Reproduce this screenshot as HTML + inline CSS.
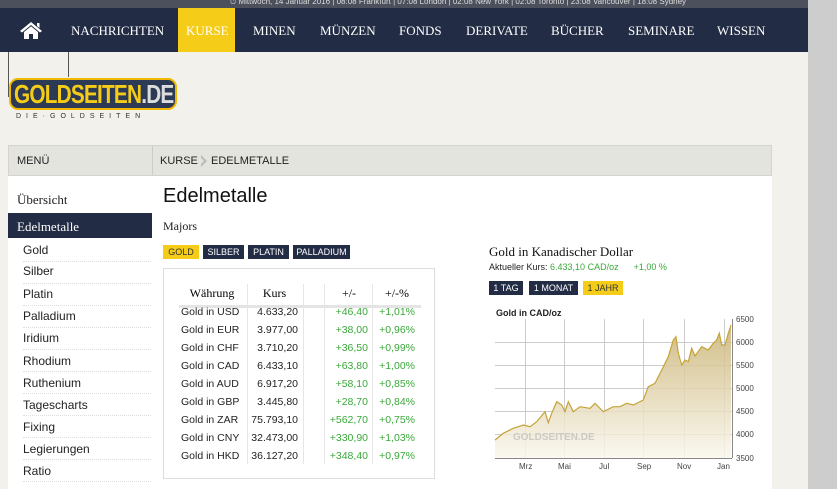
<!DOCTYPE html>
<html><head><meta charset="utf-8"><style>
*{margin:0;padding:0;box-sizing:border-box}
html,body{width:837px;height:489px;overflow:hidden}
body{background:#f2f1ec;font-family:"Liberation Sans",sans-serif;position:relative}
.abs{position:absolute}
#top{left:0;top:0;width:808px;height:8px;background:#4b505c;color:#ddd;font-size:8px;line-height:3px;overflow:hidden}
#nav{left:0;top:8px;width:808px;height:44px;background:#222c45}
#nav span{position:absolute;top:15px;color:#fff;font:13px "Liberation Serif",serif;white-space:nowrap}
#kurse{left:178px;top:8px;width:57px;height:44px;background:#f5cc17}
#sb{left:808px;top:0;width:29px;height:489px;background:#cdcdcd}
#hdr{left:8px;top:145px;width:764px;height:31px;background:#e4e4df;border:1px solid #d4d4ce}
#hdr span{position:absolute;top:9px;font-size:11px;color:#222;white-space:nowrap}
#white{left:8px;top:176px;width:764px;height:313px;background:#fff}
.mi{position:absolute;left:23px;font-size:12px;color:#222}
.ml{position:absolute;left:23px;width:128px;border-bottom:1px dotted #ddd}
.btn{position:absolute;height:14px;font-size:9px;line-height:14px;text-align:center;color:#fff;background:#222c45}
.y{background:#f5cc17;color:#333}
#tb{left:163px;top:268px;width:272px;height:211px;border:1px solid #ddd;background:#fff}
.r{position:absolute;font-size:10.5px;color:#222;white-space:nowrap;line-height:18px}
.g{color:#3aa83a}
</style></head><body>
<div id="top" class="abs"><span style="position:absolute;left:230px;top:0;white-space:nowrap">⏱ Mittwoch, 14 Januar 2016 | 08:08 Frankfurt | 07:08 London | 02:08 New York | 02:08 Toronto | 23:08 Vancouver | 18:08 Sydney</span></div>
<div id="nav" class="abs">
<svg style="position:absolute;left:19px;top:13px" width="24" height="18" viewBox="0 0 24 18"><path d="M12 1 L1 10 L3 11.5 L12 4 L21 11.5 L23 10 Z" fill="#fff"/><path d="M18 2h2.5v5L18 5z" fill="#fff"/><path d="M5 11 L12 5.3 L19 11 V18 H14 V13 H10 V18 H5 Z" fill="#fff"/></svg>
<span style="left:71px">NACHRICHTEN</span>
<span style="left:253px">MINEN</span>
<span style="left:320px">MÜNZEN</span>
<span style="left:399px">FONDS</span>
<span style="left:466px">DERIVATE</span>
<span style="left:551px">BÜCHER</span>
<span style="left:628px">SEMINARE</span>
<span style="left:717px">WISSEN</span>
</div>
<div id="kurse" class="abs"><span style="position:absolute;left:8px;top:15px;color:#fff;font:13px 'Liberation Serif',serif">KURSE</span></div>
<div class="abs" style="left:8px;top:52px;width:1px;height:45px;background:#555"></div>
<div class="abs" style="left:68px;top:52px;width:1px;height:25px;background:#555"></div>
<div class="abs" style="left:9px;top:78px;width:168px;height:32px;border-radius:9px;background:#2d3a55;border:2px solid #f0b800"></div>
<div class="abs" style="left:14px;top:79px;font:bold 26px 'Liberation Sans',sans-serif;color:#f5cc17;letter-spacing:-1px;transform:scaleX(.8);transform-origin:left;white-space:nowrap">GOLDSEITEN<span style="color:#ddd">.DE</span></div>
<div class="abs" style="left:16px;top:113px;font-size:7px;letter-spacing:5px;color:#333;white-space:nowrap">DIE·GOLDSEITEN</div>
<div id="sb" class="abs"></div>
<div id="hdr" class="abs"><span style="left:8px">MENÜ</span><div style="position:absolute;left:143px;top:0;width:1px;height:29px;background:#ccc"></div><span style="left:151px">KURSE</span><svg style="position:absolute;left:191px;top:9px" width="8" height="12"><path d="M1 0 L7 6 L1 12 L1 9 L4 6 L1 3Z" fill="#bbb"/></svg><span style="left:202px">EDELMETALLE</span></div>
<div id="white" class="abs"></div>
<div class="abs" style="left:17px;top:192px;font:13px 'Liberation Serif',serif;color:#222">Übersicht</div>
<div class="abs" style="left:8px;top:213px;width:144px;height:25px;background:#222c45"></div>
<div class="abs" style="left:17px;top:219px;font:13px 'Liberation Serif',serif;color:#fff">Edelmetalle</div>
<div class="mi" style="top:243px">Gold</div><div class="ml" style="top:261px"></div>
<div class="mi" style="top:264px">Silber</div><div class="ml" style="top:283px"></div>
<div class="mi" style="top:287px">Platin</div><div class="ml" style="top:305px"></div>
<div class="mi" style="top:309px">Palladium</div><div class="ml" style="top:327px"></div>
<div class="mi" style="top:331px">Iridium</div><div class="ml" style="top:349px"></div>
<div class="mi" style="top:354px">Rhodium</div><div class="ml" style="top:371px"></div>
<div class="mi" style="top:376px">Ruthenium</div><div class="ml" style="top:393px"></div>
<div class="mi" style="top:398px">Tagescharts</div><div class="ml" style="top:415px"></div>
<div class="mi" style="top:420px">Fixing</div><div class="ml" style="top:437px"></div>
<div class="mi" style="top:442px">Legierungen</div><div class="ml" style="top:459px"></div>
<div class="mi" style="top:464px">Ratio</div><div class="ml" style="top:481px"></div>
<div class="abs" style="left:163px;top:185px;font-size:20px;color:#111">Edelmetalle</div>
<div class="abs" style="left:163px;top:219px;font:12px 'Liberation Serif',serif;color:#222">Majors</div>
<div class="btn y" style="left:163px;top:245px;width:36px">GOLD</div>
<div class="btn" style="left:203px;top:245px;width:41px">SILBER</div>
<div class="btn" style="left:248px;top:245px;width:41px">PLATIN</div>
<div class="btn" style="left:293px;top:245px;width:57px">PALLADIUM</div>
<div id="tb" class="abs">
<div style="position:absolute;left:15px;top:36px;width:242px;height:3px;background:#e4e4e4"></div>
<div style="position:absolute;left:83px;top:15px;width:1px;height:180px;background:#e6e6e6"></div>
<div style="position:absolute;left:139px;top:15px;width:1px;height:180px;background:#e6e6e6"></div>
<div style="position:absolute;left:160px;top:15px;width:1px;height:180px;background:#e6e6e6"></div>
<div style="position:absolute;left:208px;top:15px;width:1px;height:180px;background:#e6e6e6"></div>
<div style="position:absolute;left:13px;top:17px;width:70px;text-align:center;font:12px 'Liberation Serif',serif">Währung</div>
<div style="position:absolute;left:88px;top:17px;width:45px;text-align:center;font:12px 'Liberation Serif',serif">Kurs</div>
<div style="position:absolute;left:170px;top:17px;width:30px;text-align:center;font:12px 'Liberation Serif',serif">+/-</div>
<div style="position:absolute;left:213px;top:17px;width:40px;text-align:center;font:12px 'Liberation Serif',serif">+/-%</div>
</div>
<div class="abs" style="left:163px;top:268px;width:272px;height:211px">
<div class="r" style="top:35px;left:18px">Gold in USD<br>Gold in EUR<br>Gold in CHF<br>Gold in CAD<br>Gold in AUD<br>Gold in GBP<br>Gold in ZAR<br>Gold in CNY<br>Gold in HKD</div>
<div class="r" style="top:35px;left:75px;width:60px;text-align:right">4.633,20<br>3.977,00<br>3.710,20<br>6.433,10<br>6.917,20<br>3.445,80<br>75.793,10<br>32.473,00<br>36.127,20</div>
<div class="r g" style="top:35px;left:145px;width:60px;text-align:right">+46,40<br>+38,00<br>+36,50<br>+63,80<br>+58,10<br>+28,70<br>+562,70<br>+330,90<br>+348,40</div>
<div class="r g" style="top:35px;left:195px;width:57px;text-align:right">+1,01%<br>+0,96%<br>+0,99%<br>+1,00%<br>+0,85%<br>+0,84%<br>+0,75%<br>+1,03%<br>+0,97%</div>
</div>
<div class="abs" style="left:489px;top:244px;font:13px 'Liberation Serif',serif;color:#111;white-space:nowrap">Gold in Kanadischer Dollar</div>
<div class="abs" style="left:489px;top:262px;font-size:9px;color:#222;white-space:nowrap">Aktueller Kurs: <span class="g">6.433,10 CAD/oz</span> &nbsp;&nbsp;&nbsp;&nbsp;&nbsp;<span class="g">+1,00 %</span></div>
<div class="btn" style="left:489px;top:281px;width:34px">1 TAG</div>
<div class="btn" style="left:529px;top:281px;width:49px">1 MONAT</div>
<div class="btn y" style="left:583px;top:281px;width:40px">1 JAHR</div>
<svg class="abs" style="left:480px;top:300px" width="300" height="180" viewBox="480 300 300 180">
<defs><linearGradient id="gr" x1="0" y1="0" x2="0" y2="1"><stop offset="0" stop-color="#c9b272"/><stop offset="1" stop-color="#faf7ee"/></linearGradient></defs>
<text x="496" y="316" font-family="Liberation Sans" font-weight="bold" font-size="9" fill="#222">Gold in  CAD/oz</text>
<rect x="495" y="319" width="237" height="139" fill="#fff"/>
<g stroke="#ccc" stroke-width="1">
<line x1="495" y1="342.5" x2="732" y2="342.5"/><line x1="495" y1="365.5" x2="732" y2="365.5"/><line x1="495" y1="388.5" x2="732" y2="388.5"/><line x1="495" y1="411.5" x2="732" y2="411.5"/><line x1="495" y1="434.5" x2="732" y2="434.5"/>
<line x1="525.5" y1="319" x2="525.5" y2="458"/><line x1="564.5" y1="319" x2="564.5" y2="458"/><line x1="604.5" y1="319" x2="604.5" y2="458"/><line x1="643.5" y1="319" x2="643.5" y2="458"/><line x1="684.5" y1="319" x2="684.5" y2="458"/><line x1="724.5" y1="319" x2="724.5" y2="458"/>
</g>
<path d="M495 440 L503.3 433.3 L513.3 428.3 L523.3 425 L530 426.7 L536.7 421.7 L545 411.7 L548.3 422.7 L551.7 413.3 L556.7 401.7 L561.7 405 L565 411.7 L568.3 401.7 L573.3 411.7 L580 406.7 L590 408.3 L595 403.3 L603.3 411.7 L613.3 406.7 L620 406.7 L626.7 403.3 L633.3 405 L643.3 400 L648.3 386.7 L655 383.3 L661.7 370 L668.3 356.7 L673.3 340 L676 336.7 L678.3 353.3 L681.7 365 L685 360 L688.3 361.7 L691.7 348.3 L695 356 L701.7 346.7 L708.3 350 L713.3 343.3 L716.7 340 L719.3 333.3 L721.7 345 L725 345 L728.3 333.3 L731 325 L731 458 L495 458 Z" fill="url(#gr)" opacity=".85"/>
<path d="M495 440 L503.3 433.3 L513.3 428.3 L523.3 425 L530 426.7 L536.7 421.7 L545 411.7 L548.3 422.7 L551.7 413.3 L556.7 401.7 L561.7 405 L565 411.7 L568.3 401.7 L573.3 411.7 L580 406.7 L590 408.3 L595 403.3 L603.3 411.7 L613.3 406.7 L620 406.7 L626.7 403.3 L633.3 405 L643.3 400 L648.3 386.7 L655 383.3 L661.7 370 L668.3 356.7 L673.3 340 L676 336.7 L678.3 353.3 L681.7 365 L685 360 L688.3 361.7 L691.7 348.3 L695 356 L701.7 346.7 L708.3 350 L713.3 343.3 L716.7 340 L719.3 333.3 L721.7 345 L725 345 L728.3 333.3 L731 325" fill="none" stroke="#c4a437" stroke-width="1.2"/>
<text x="513" y="440" font-family="Liberation Sans" font-weight="bold" font-size="10" fill="#bbb" opacity=".7">GOLDSEITEN.DE</text>
<line x1="732.5" y1="319" x2="732.5" y2="458" stroke="#888"/>
<line x1="495" y1="458.5" x2="732" y2="458.5" stroke="#888"/>
<g font-family="Liberation Sans" font-size="8" fill="#444">
<text x="736" y="322">6500</text><text x="736" y="345">6000</text><text x="736" y="368">5500</text><text x="736" y="391">5000</text><text x="736" y="414">4500</text><text x="736" y="437">4000</text><text x="736" y="461">3500</text>
<text x="519" y="469">Mrz</text><text x="558" y="469">Mai</text><text x="599" y="469">Jul</text><text x="637" y="469">Sep</text><text x="677" y="469">Nov</text><text x="717" y="469">Jan</text>
</g>
</svg>
</body></html>
